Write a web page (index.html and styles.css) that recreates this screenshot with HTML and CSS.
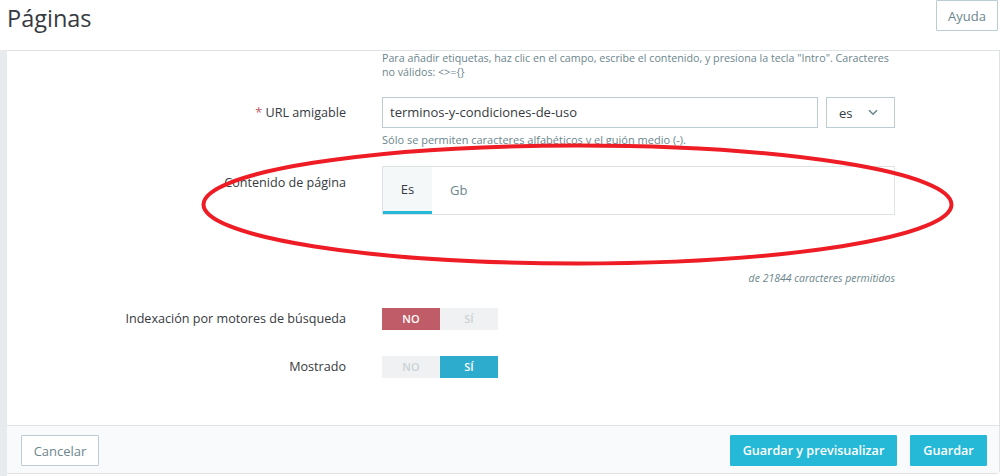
FILE: index.html
```html
<!DOCTYPE html>
<html lang="es">
<head>
<meta charset="utf-8">
<title>Páginas</title>
<link rel="stylesheet" href="styles.css">
</head>
<body>
<div class="page">
  <header class="topbar">
    <h1 class="title">Páginas</h1>
    <button class="btn-help">Ayuda</button>
  </header>
  <div class="main">
    <div class="strip"></div>
    <div class="panel">
      <div class="panel-body">
        <div class="row row-help">
          <div class="label-col"></div>
          <div class="control-col">
            <p class="help help-first">Para añadir etiquetas, haz clic en el campo, escribe el contenido, y presiona la tecla "Intro". Caracteres<br>no válidos: &lt;&gt;={}</p>
          </div>
        </div>
        <div class="row row-url">
          <div class="label-col"><label class="label label-input"><span class="req">*</span> URL amigable</label></div>
          <div class="control-col">
            <div class="input-group">
              <div class="input">terminos-y-condiciones-de-uso</div>
              <div class="lang-select">
                <span>es</span>
                <svg class="chev" width="10" height="7" viewBox="0 0 10 7"><path d="M1 1.2 L5 5.2 L9 1.2" fill="none" stroke="#6c868e" stroke-width="1.6"/></svg>
              </div>
            </div>
            <p class="help help-under">Sólo se permiten caracteres alfabéticos y el guión medio (-).</p>
          </div>
        </div>
        <div class="row row-content">
          <div class="label-col"><label class="label label-top">Contenido de página</label></div>
          <div class="control-col">
            <div class="tabs">
              <div class="tab tab-active">Es</div>
              <div class="tab">Gb</div>
            </div>
            <p class="counter">de 21844 caracteres permitidos</p>
          </div>
        </div>
        <div class="row row-switch row-index">
          <div class="label-col"><label class="label">Indexación por motores de búsqueda</label></div>
          <div class="control-col">
            <div class="switch">
              <span class="sw sw-no-on">NO</span>
              <span class="sw sw-off">SÍ</span>
            </div>
          </div>
        </div>
        <div class="row row-switch row-shown">
          <div class="label-col"><label class="label">Mostrado</label></div>
          <div class="control-col">
            <div class="switch">
              <span class="sw sw-off">NO</span>
              <span class="sw sw-yes-on">SÍ</span>
            </div>
          </div>
        </div>
      </div>
      <div class="panel-footer">
        <button class="btn btn-outline">Cancelar</button>
        <div class="footer-right">
          <button class="btn btn-primary btn-preview">Guardar y previsualizar</button>
          <button class="btn btn-primary btn-save">Guardar</button>
        </div>
      </div>
    </div>
  </div>
  <svg class="annotation" width="1000" height="476" viewBox="0 0 1000 476">
    <ellipse cx="577.5" cy="204.5" rx="374" ry="59" fill="none" stroke="#ee1c25" stroke-width="4"/>
  </svg>
</div>
</body>
</html>
```

FILE: styles.css
```css
* { box-sizing: border-box; }

html, body {
  margin: 0;
  padding: 0;
  background: #ffffff;
}

body {
  font-family: "Open Sans", "DejaVu Sans", sans-serif;
  color: #363a41;
  font-size: 13px;
}

.page {
  position: relative;
  width: 1000px;
  height: 476px;
  overflow: hidden;
}

.topbar {
  height: 50px;
  display: flex;
  justify-content: space-between;
  align-items: flex-start;
}

.title {
  margin: 0;
  padding: 1px 0 0 7px;
  font-size: 23.5px;
  font-weight: 400;
  line-height: 34px;
  color: #363a41;
}

.btn-help {
  margin: 0 2px 0 0;
  width: 62px;
  height: 31px;
  border: 1px solid #bbcdd2;
  border-radius: 1px;
  background: #fff;
  font-family: inherit;
  font-size: 13px;
  color: #6c868e;
  padding: 0;
}

.main {
  display: flex;
  height: 426px;
}

.strip {
  width: 7px;
  background: #e7ebee;
}

.panel {
  flex: 1;
  display: flex;
  flex-direction: column;
  border-top: 1px solid #dfe3e6;
  border-right: 1px solid #dfe3e6;
  border-bottom: 1px solid #dfe3e6;
  border-radius: 0 0 4px 0;
  height: 424px;
  background: #fff;
}

.panel-body {
  flex: 1;
  overflow: hidden;
}

.row {
  display: flex;
}

.label-col {
  width: 375px;
  padding-right: 36px;
  text-align: right;
  flex: none;
}

.control-col {
  width: 513px;
  flex: none;
}

.label {
  display: block;
  font-size: 12.6px;
  color: #363a41;
  line-height: 20px;
}

.req {
  color: #c05c67;
}

.help {
  margin: 0;
  font-size: 11px;
  line-height: 16px;
  color: #6c868e;
}

.help-first {
  font-size: 10.7px;
  line-height: 14px;
  white-space: nowrap;
}

.row-url {
  margin-top: 18px;
}

.label-input {
  line-height: 31px;
}

.input-group {
  display: flex;
  gap: 8px;
}

.input {
  width: 436px;
  height: 31px;
  border: 1px solid #bbcdd2;
  padding: 0 7px;
  line-height: 29px;
  font-size: 13px;
  color: #363a41;
}

.lang-select {
  width: 69px;
  height: 31px;
  border: 1px solid #bbcdd2;
  display: flex;
  align-items: center;
  justify-content: space-between;
  padding: 0 16px 0 12px;
  font-size: 13px;
  color: #363a41;
}

.chev {
  display: block;
}

.help-under {
  margin-top: 4px;
}

.row-content {
  margin-top: 18px;
}

.label-top {
  padding-top: 7px;
}

.tabs {
  height: 49px;
  border: 1px solid #dfe3e6;
  display: flex;
}

.tab {
  padding: 0 18px;
  line-height: 47px;
  font-size: 13px;
  color: #6c868e;
}

.tab-active {
  background: #f5f8f9;
  color: #363a41;
  border-bottom: 3px solid #25b9d7;
  line-height: 44px;
  padding: 0 17px;
  width: 49px;
  text-align: center;
}

.counter {
  margin: 55px 0 0;
  text-align: right;
  font-size: 10.5px;
  line-height: 16px;
  font-style: italic;
  color: #6c868e;
}

.row-switch {
  align-items: center;
}

.row-index {
  margin-top: 22px;
}

.row-shown {
  margin-top: 26px;
}

.switch {
  display: flex;
  width: 116px;
  height: 22px;
}

.sw {
  width: 58px;
  height: 22px;
  text-align: center;
  line-height: 22px;
  font-size: 11px;
  font-weight: 600;
}

.sw-off {
  background: #eff1f2;
  color: #cbd2d6;
}

.sw-no-on {
  background: #c05c67;
  color: #fff;
}

.sw-yes-on {
  background: #2eacce;
  color: #fff;
}

.panel-footer {
  height: 48px;
  border-top: 1px solid #dde4e8;
  background: #f8fafb;
  display: flex;
  justify-content: space-between;
  align-items: flex-start;
  padding: 9px 12px 0 14px;
}

.footer-right {
  display: flex;
  gap: 13px;
}

.btn {
  height: 31px;
  font-family: inherit;
  font-size: 13px;
  border-radius: 1px;
  padding: 0;
}

.btn-outline {
  width: 78px;
  border: 1px solid #bbcdd2;
  background: #fff;
  color: #6c868e;
}

.btn-primary {
  border: 1px solid #25b9d7;
  background: #25b9d7;
  color: #fff;
  font-weight: 600;
  font-size: 12.6px;
}

.btn-preview {
  width: 167px;
}

.btn-save {
  width: 77px;
}

.annotation {
  position: absolute;
  left: 0;
  top: 0;
  pointer-events: none;
}
```
